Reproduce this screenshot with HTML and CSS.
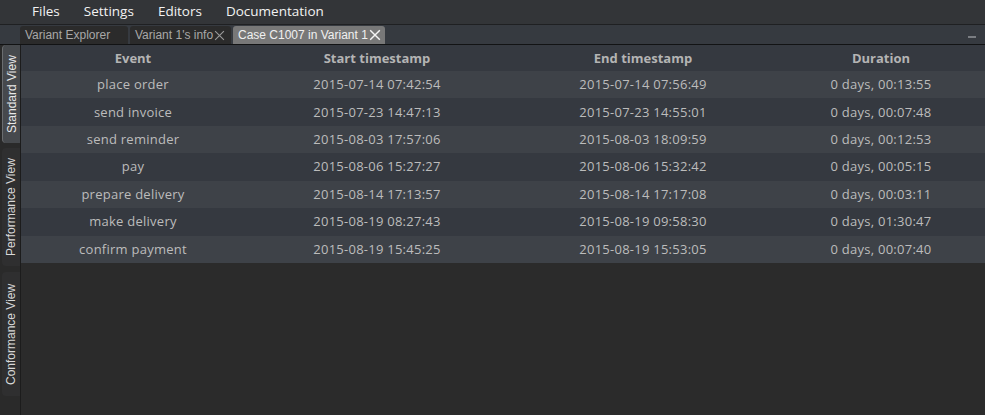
FILE: index.html
```html
<!DOCTYPE html>
<html>
<head>
<meta charset="utf-8">
<link rel="stylesheet" href="styles.css">
</head>
<body>
<div class="app">
  <div class="menubar">
    <span class="menu-item">Files</span>
    <span class="menu-item">Settings</span>
    <span class="menu-item">Editors</span>
    <span class="menu-item">Documentation</span>
  </div>
  <div class="tabbar">
    <div class="tab tab-explorer">Variant Explorer</div>
    <div class="tab tab-info">Variant 1's info<svg class="close" viewBox="0 0 10 10"><path d="M1 1L9 9M9 1L1 9"/></svg></div>
    <div class="tab tab-active">Case C1007 in Variant 1<svg class="close" viewBox="0 0 10 10"><path d="M1 1L9 9M9 1L1 9"/></svg></div>
    <div class="spacer"></div>
    <div class="minimize"></div>
  </div>
  <div class="main">
    <div class="sidebar">
      <div class="vtab vtab-standard active">Standard View</div>
      <div class="vtab vtab-performance">Performance View</div>
      <div class="vtab vtab-conformance">Conformance View</div>
    </div>
    <div class="content">
      <div class="table">
        <div class="row head">
          <div class="cell">Event</div>
          <div class="cell">Start timestamp</div>
          <div class="cell">End timestamp</div>
          <div class="cell">Duration</div>
        </div>
        <div class="row odd">
          <div class="cell">place order</div>
          <div class="cell">2015-07-14 07:42:54</div>
          <div class="cell">2015-07-14 07:56:49</div>
          <div class="cell">0 days, 00:13:55</div>
        </div>
        <div class="row even">
          <div class="cell">send invoice</div>
          <div class="cell">2015-07-23 14:47:13</div>
          <div class="cell">2015-07-23 14:55:01</div>
          <div class="cell">0 days, 00:07:48</div>
        </div>
        <div class="row odd">
          <div class="cell">send reminder</div>
          <div class="cell">2015-08-03 17:57:06</div>
          <div class="cell">2015-08-03 18:09:59</div>
          <div class="cell">0 days, 00:12:53</div>
        </div>
        <div class="row even">
          <div class="cell">pay</div>
          <div class="cell">2015-08-06 15:27:27</div>
          <div class="cell">2015-08-06 15:32:42</div>
          <div class="cell">0 days, 00:05:15</div>
        </div>
        <div class="row odd">
          <div class="cell">prepare delivery</div>
          <div class="cell">2015-08-14 17:13:57</div>
          <div class="cell">2015-08-14 17:17:08</div>
          <div class="cell">0 days, 00:03:11</div>
        </div>
        <div class="row even">
          <div class="cell">make delivery</div>
          <div class="cell">2015-08-19 08:27:43</div>
          <div class="cell">2015-08-19 09:58:30</div>
          <div class="cell">0 days, 01:30:47</div>
        </div>
        <div class="row odd">
          <div class="cell">confirm payment</div>
          <div class="cell">2015-08-19 15:45:25</div>
          <div class="cell">2015-08-19 15:53:05</div>
          <div class="cell">0 days, 00:07:40</div>
        </div>
      </div>
    </div>
  </div>
</div>
</body>
</html>
```
FILE: styles.css
```css
html, body {
  margin: 0;
  padding: 0;
  background: #2a2a2a;
}
.app {
  width: 985px;
  height: 415px;
  overflow: hidden;
  display: flex;
  flex-direction: column;
}
.menubar {
  height: 24px;
  background: #333538;
  border-bottom: 1px solid #1f2022;
  display: flex;
  align-items: center;
  padding-left: 20px;
  font-family: "Open Sans", "Noto Sans", sans-serif;
  font-size: 13.5px;
  color: #f2f2f2;
}
.menu-item {
  padding: 0 12px 2px;
  line-height: 22px;
}
.tabbar {
  height: 19px;
  background: #363a40;
  border-bottom: 1px solid #121314;
  display: flex;
  align-items: flex-end;
  padding-left: 20px;
  gap: 2px;
  font-family: "Liberation Sans", Arial, sans-serif;
  font-size: 12px;
}
.tab {
  height: 18px;
  line-height: 18px;
  padding: 0 5px;
  background: #2b2b2b;
  color: #a8a8a8;
  border-radius: 3px 3px 0 0;
  display: flex;
  align-items: center;
  box-sizing: border-box;
  white-space: nowrap;
}
.tab-explorer { width: 108px; }
.tab-info { width: 101px; padding-right: 4px; }
.tab-active {
  width: 152px;
  background: #787878;
  color: #f0f0f0;
  padding-right: 3px;
}
.close {
  width: 11px;
  height: 11px;
  margin-left: 1px;
  fill: none;
  stroke: #9a9a9a;
  stroke-width: 1;
}
.tab-active .close {
  width: 12px;
  height: 12px;
  stroke: #f4f4f4;
  stroke-width: 1.2;
}
.spacer { flex: 1; }
.minimize {
  width: 8px;
  height: 2px;
  background: #7a7d82;
  margin: 0 9px 6px 0;
  align-self: flex-end;
}
.main {
  flex: 1;
  display: flex;
}
.sidebar {
  width: 20px;
  background: #2a2a2a;
  border-right: 1px solid #1c1c1c;
  display: flex;
  flex-direction: column;
  font-family: "Liberation Sans", Arial, sans-serif;
  font-size: 12px;
}
.vtab {
  margin-left: 2px;
  width: 18px;
  box-sizing: border-box;
  background: #2f2f30;
  color: #d8d8d8;
  writing-mode: vertical-rl;
  transform: rotate(180deg);
  border-radius: 0 4px 4px 0;
  display: flex;
  align-items: center;
  justify-content: center;
  line-height: 18px;
}
.vtab.active {
  background: #46494d;
  color: #e8e8e8;
  border-right: 1px solid #6a6d70;
}
.vtab-standard { height: 98px; }
.vtab-performance { height: 118px; margin-top: 5px; }
.vtab-conformance { height: 124px; margin-top: 6px; }
.content {
  flex: 1;
  background: #2b2b2b;
}
.table {
  font-family: "Open Sans", "Noto Sans", sans-serif;
  font-size: 13px;
  color: #bcbcbc;
}
.row {
  display: grid;
  grid-template-columns: 224px 264px 268px 1fr;
  height: 27.43px;
  align-items: center;
  letter-spacing: 0.25px;
  padding-bottom: 1px;
  box-sizing: border-box;
}
.row.head {
  height: 26px;
  background: #353940;
  font-weight: 700;
  color: #b4b4b4;
  letter-spacing: 0;
}
.row.odd { background: #3e4248; }
.row.even { background: #353940; }
.cell {
  text-align: center;
  white-space: nowrap;
}
```
